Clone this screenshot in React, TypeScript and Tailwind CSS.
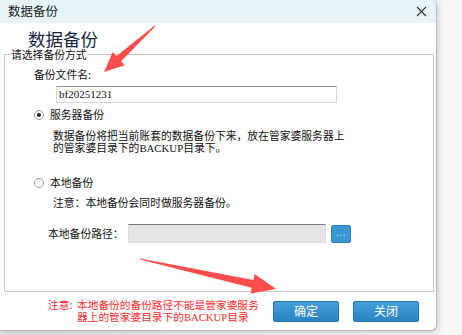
import React from 'react';

const cjk = "font-['Noto_Sans_CJK_SC','Noto_Sans',sans-serif]";

function Radio({ checked }: { checked?: boolean }) {
  return (
    <span className="flex h-[10px] w-[10px] items-center justify-center rounded-full border border-[#9a9a9a] bg-white">
      {checked && <span className="h-[4px] w-[4px] rounded-full bg-[#222]" />}
    </span>
  );
}

function BlueButton({ children }: { children: React.ReactNode }) {
  return (
    <button className="h-[21px] w-[66px] rounded-[2px] border border-[#2673ad] bg-gradient-to-b from-[#43a0da] to-[#2b82c2] text-[12px] leading-none text-white">
      {children}
    </button>
  );
}

export default function App() {
  return (
    <div className={`relative flex h-[335px] w-[462px] overflow-hidden bg-gradient-to-r from-[#e4e4e4] to-[#f7f7f7] ${cjk}`}>
      {/* dialog window */}
      <div className="flex h-[331px] w-[437px] shrink-0 flex-col overflow-hidden rounded-br-[6px] rounded-tr-[6px] border-b border-r border-[#b9b9b9] bg-white shadow-[1px_1px_6px_rgba(0,0,0,0.18)]">
        <div className="flex h-[23px] shrink-0 items-center justify-between bg-[#e6f4f7] pl-[8px] pr-[9px]">
          <span className="text-[12.5px] leading-none text-[#1a1a1a]">数据备份</span>
          <svg width="11" height="11" viewBox="0 0 11 11">
            <path d="M1 1 L10 10 M10 1 L1 10" stroke="#333" strokeWidth="1.1" />
          </svg>
        </div>

        <div className="h-[25px] shrink-0 pl-[28px] pt-[7px] text-[17.5px] leading-[18px] text-[#15233f]">数据备份</div>

        <fieldset className="ml-[4px] mr-[2px] h-[244px] shrink-0 border border-[#c6c6c6] text-[10.8px] text-[#111]">
          <legend className="ml-[6px] px-0 leading-[13px]">请选择备份方式</legend>

          <div className="mt-[7px] pl-[29px] leading-[13px]">备份文件名:</div>
          <div className="ml-[51px] mt-[5px] flex h-[17px] w-[281px] items-center border border-[#d6d6d6] border-t-[#8f8f8f] pl-[2px] font-['Liberation_Serif',serif] text-[11px]">
            bf20251231
          </div>

          <div className="ml-[29px] mt-[5px] flex h-[13px] items-center gap-[6px] leading-[13px]">
            <Radio checked />
            <span>服务器备份</span>
          </div>
          <div className="ml-[48px] mt-[8px] leading-[12px]">
            数据备份将把当前账套的数据备份下来，放在管家婆服务器上
            <br />
            的管家婆目录下的<span className="font-['Liberation_Serif',serif]">BACKUP</span>目录下。
          </div>

          <div className="ml-[29px] mt-[22px] flex h-[13px] items-center gap-[6px] leading-[13px]">
            <Radio />
            <span>本地备份</span>
          </div>
          <div className="ml-[48px] mt-[7px] leading-[13px]">注意：本地备份会同时做服务器备份。</div>

          <div className="ml-[43px] mt-[15px] flex h-[19px] items-center">
            <span className="w-[80px] leading-[13px]">本地备份路径：</span>
            <div className="h-[19px] w-[198px] border border-[#dcdcdc] border-t-[#7a7a7a] bg-[#e5e5e5]" />
            <button className="ml-[5px] flex h-[18px] w-[20px] items-center justify-center rounded-[2px] border border-[#2e7fbd] bg-[#3a97d2] pb-[3px] text-[9px] leading-none tracking-[1px] text-[#cfe6f6]">
              ...
            </button>
          </div>
        </fieldset>

        <div className="flex flex-1 items-center pr-[17px]">
          <div className="flex pl-[48px] text-[10.7px] leading-[12px] text-[#ff2a2a]">
            <span className="w-[29px]">注意:</span>
            <span>
              本地备份的备份路径不能是管家婆服务
              <br />
              器上的管家婆目录下的<span className="font-['Liberation_Serif',serif]">BACKUP</span>目录
            </span>
          </div>
          <div className="ml-auto flex gap-[14px]">
            <BlueButton>确定</BlueButton>
            <BlueButton>关闭</BlueButton>
          </div>
        </div>
      </div>

      {/* annotation arrows */}
      <svg className="pointer-events-none absolute left-0 top-0" width="462" height="335" viewBox="0 0 462 335">
        <polygon
          points="154.7,25.6 116.5,56 112.8,51.9 104,72 124.8,65.3 121.1,61.2 155.3,26.4"
          fill="#ff4c4c"
        />
        <polygon
          points="140.1,258.5 253.5,279.9 254.7,274 276,289 250.5,293.6 251.7,287.7 139.9,259.5"
          fill="#ff4c4c"
        />
      </svg>
    </div>
  );
}
